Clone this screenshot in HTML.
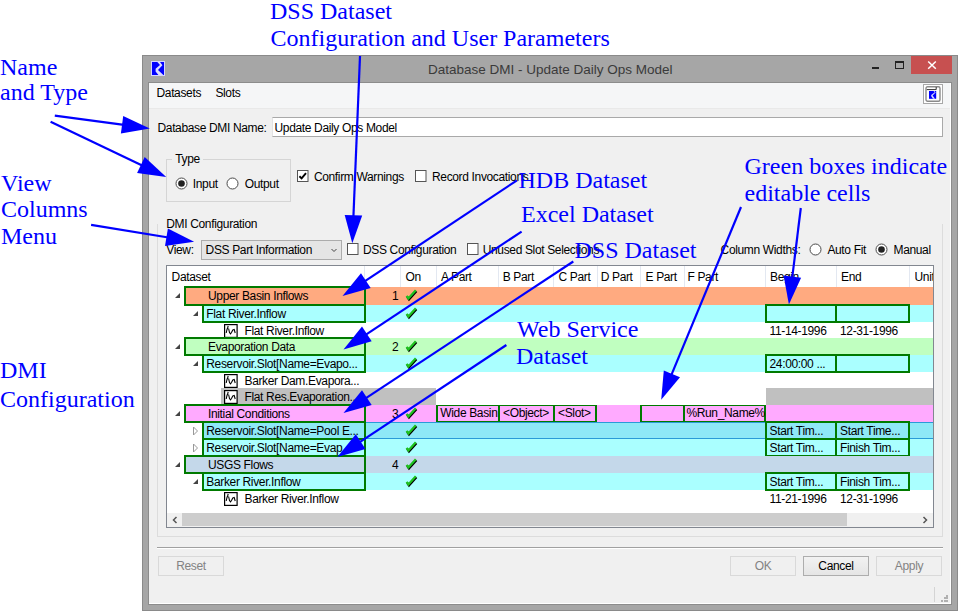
<!DOCTYPE html><html><head><meta charset="utf-8"><style>
html,body{margin:0;padding:0;background:#fff;width:963px;height:614px;overflow:hidden;position:relative}
.t{position:absolute;white-space:nowrap;font-family:"Liberation Sans",sans-serif;line-height:14px}
.s{position:absolute;white-space:nowrap;font-family:"Liberation Serif",serif;font-size:24px;line-height:28px;color:#0000ff}
.r{position:absolute;box-sizing:border-box}
svg{position:absolute;left:0;top:0}
</style></head><body>
<div class="r" style="left:142px;top:55px;width:816px;height:556px;background:#a6a6a6;border:1px solid #8a8a8a"></div>
<div class="r" style="left:148px;top:82px;width:804px;height:523px;background:#f0f0f0;border:1px solid #8c8c8c"></div>
<div class="r" style="left:149px;top:603px;width:802px;height:1px;background:#fff"></div>
<div class="r" style="left:950px;top:83px;width:1px;height:521px;background:#fff"></div>
<div class="r" style="left:149px;top:83px;width:801px;height:26px;background:#f5f6f7;border-bottom:1px solid #e9e9e9"></div>
<svg style="left:151px;top:61px" width="14" height="15" viewBox="0 0 14 15">
<rect x="0" y="0" width="14" height="15" fill="#d4d4ff"/>
<rect x="1" y="1" width="12" height="13" fill="#0000ff"/>
<polygon points="6.3,1 9,4 4.6,7.8 4.6,10.6 7.4,14 12.4,14 7,9 11.4,4.2 9,1" fill="#dcdcff"/>
</svg>
<div class="t" style="left:428.0px;top:62.72px;font-size:13.5px;letter-spacing:0px;color:#3a3a3a;">Database DMI - Update Daily Ops Model</div>
<div class="r" style="left:872px;top:66.5px;width:7px;height:2.5px;background:#222"></div>
<div class="r" style="left:895px;top:61px;width:9px;height:8px;border:1px solid #222;border-top:2px solid #222"></div>
<div class="r" style="left:911px;top:56px;width:41px;height:18px;background:#c75050"></div>
<svg style="left:926px;top:60px" width="12" height="10" viewBox="0 0 12 10">
<path d="M2.2 1.5 L9.8 8.8 M9.8 1.5 L2.2 8.8" stroke="#fff" stroke-width="1.5"/></svg>
<div class="t" style="left:156.5px;top:85.74px;font-size:12px;letter-spacing:-0.35px;color:#000;">Datasets</div>
<div class="t" style="left:215.4px;top:85.74px;font-size:12px;letter-spacing:-0.35px;color:#000;">Slots</div>
<div class="r" style="left:923px;top:84px;width:20px;height:20px;border:1px solid #a8a8a8;background:#fff"></div>
<svg style="left:925px;top:86px" width="16" height="16" viewBox="0 0 16 16">
<rect x="1" y="0.8" width="14" height="14.4" rx="1.5" fill="#fff" stroke="#8a8a8a" stroke-width="1.4"/>
<path d="M1.8 3.6 L11.2 3.6 L11.2 1" fill="none" stroke="#333" stroke-width="1"/>
<rect x="4" y="5" width="7.2" height="7.8" fill="#0000ff"/>
<polygon points="8.5,5 9.8,6.2 6.2,9 6.2,10.2 8,12.8 10,12.8 7.6,9.6 10.6,6.4 9.6,5" fill="#d8d8ff"/>
</svg>
<div class="t" style="left:157.5px;top:120.74px;font-size:12px;letter-spacing:-0.35px;color:#000;">Database DMI Name:</div>
<div class="r" style="left:272px;top:117px;width:671px;height:20px;background:#fff;border:1px solid #a9a9a9;border-left-color:#e3e3e3"></div>
<div class="t" style="left:274.5px;top:120.74px;font-size:12px;letter-spacing:-0.35px;color:#000;">Update Daily Ops Model</div>
<div class="r" style="left:166px;top:159px;width:125px;height:43px;border:1px solid #d5d5d5"></div>
<div class="r" style="left:172px;top:154px;width:31px;height:10px;background:#f0f0f0"></div>
<div class="t" style="left:175.3px;top:152.14px;font-size:12px;letter-spacing:-0.35px;color:#000;">Type</div>
<svg style="left:174.5px;top:176.8px" width="13" height="13" viewBox="0 0 13 13">
<circle cx="6.5" cy="6.5" r="5.5" fill="#fff" stroke="#4a4a4a" stroke-width="1"/><circle cx="6.5" cy="6.5" r="3.3" fill="#222"/></svg>
<div class="t" style="left:192.8px;top:176.84px;font-size:12px;letter-spacing:-0.35px;color:#000;">Input</div>
<svg style="left:226.3px;top:176.8px" width="13" height="13" viewBox="0 0 13 13">
<circle cx="6.5" cy="6.5" r="5.5" fill="#fff" stroke="#4a4a4a" stroke-width="1"/></svg>
<div class="t" style="left:244.7px;top:176.84px;font-size:12px;letter-spacing:-0.35px;color:#000;">Output</div>
<svg style="left:296.6px;top:169.8px" width="13" height="13" viewBox="0 0 13 13">
<rect x="0.5" y="0.5" width="10.5" height="11" fill="#fff" stroke="#555" stroke-width="1"/><path d="M2.4 6.3 L4.6 8.4 L9 3.2" fill="none" stroke="#000" stroke-width="1.9"/></svg>
<div class="t" style="left:313.9px;top:169.64px;font-size:12px;letter-spacing:-0.35px;color:#000;">Confirm Warnings</div>
<svg style="left:414.5px;top:169.8px" width="13" height="13" viewBox="0 0 13 13">
<rect x="0.5" y="0.5" width="10.5" height="11" fill="#fff" stroke="#555" stroke-width="1"/></svg>
<div class="t" style="left:432.0px;top:169.64px;font-size:12px;letter-spacing:-0.35px;color:#000;">Record Invocations</div>
<div class="r" style="left:157px;top:224px;width:786px;height:313px;border:1px solid #dcdcdc;border-top:none"></div>
<div class="t" style="left:166.3px;top:217.24px;font-size:12px;letter-spacing:-0.35px;color:#000;">DMI Configuration</div>
<div class="t" style="left:166.3px;top:242.84px;font-size:12px;letter-spacing:-0.35px;color:#000;">View:</div>
<div class="r" style="left:201px;top:240px;width:141px;height:20px;background:#e5e5e5;border:1px solid #acacac"></div>
<div class="t" style="left:205.6px;top:242.84px;font-size:12px;letter-spacing:-0.35px;color:#000;">DSS Part Information</div>
<svg style="left:330px;top:247px" width="8" height="7" viewBox="0 0 8 7"><path d="M1.5 2 L4 4.5 L6.5 2" stroke="#444" stroke-width="1" fill="none"/></svg>
<svg style="left:346.7px;top:243px" width="13" height="13" viewBox="0 0 13 13">
<rect x="0.5" y="0.5" width="10.5" height="11" fill="#fff" stroke="#555" stroke-width="1"/></svg>
<div class="t" style="left:363.0px;top:242.84px;font-size:12px;letter-spacing:-0.35px;color:#000;">DSS Configuration</div>
<svg style="left:466.5px;top:243px" width="13" height="13" viewBox="0 0 13 13">
<rect x="0.5" y="0.5" width="10.5" height="11" fill="#fff" stroke="#555" stroke-width="1"/></svg>
<div class="t" style="left:482.7px;top:242.84px;font-size:12px;letter-spacing:-0.35px;color:#000;">Unused Slot Selections</div>
<div class="t" style="left:720.6px;top:242.84px;font-size:12px;letter-spacing:-0.35px;color:#000;">Column Widths:</div>
<svg style="left:809.3px;top:242.5px" width="13" height="13" viewBox="0 0 13 13">
<circle cx="6.5" cy="6.5" r="5.5" fill="#fff" stroke="#4a4a4a" stroke-width="1"/></svg>
<div class="t" style="left:827.4px;top:242.84px;font-size:12px;letter-spacing:-0.35px;color:#000;">Auto Fit</div>
<svg style="left:875.4px;top:242.5px" width="13" height="13" viewBox="0 0 13 13">
<circle cx="6.5" cy="6.5" r="5.5" fill="#fff" stroke="#4a4a4a" stroke-width="1"/><circle cx="6.5" cy="6.5" r="3.3" fill="#222"/></svg>
<div class="t" style="left:893.5px;top:242.84px;font-size:12px;letter-spacing:-0.35px;color:#000;">Manual</div>
<div class="r" style="left:166px;top:265px;width:768px;height:263px;background:#fff;border:1px solid #828790"></div>
<div class="r" style="left:364px;top:266px;width:1px;height:21px;background:#e3e8f1"></div>
<div class="r" style="left:400px;top:266px;width:1px;height:21px;background:#e3e8f1"></div>
<div class="r" style="left:436px;top:266px;width:1px;height:21px;background:#e3e8f1"></div>
<div class="r" style="left:498px;top:266px;width:1px;height:21px;background:#e3e8f1"></div>
<div class="r" style="left:553px;top:266px;width:1px;height:21px;background:#e3e8f1"></div>
<div class="r" style="left:597px;top:266px;width:1px;height:21px;background:#e3e8f1"></div>
<div class="r" style="left:640px;top:266px;width:1px;height:21px;background:#e3e8f1"></div>
<div class="r" style="left:684px;top:266px;width:1px;height:21px;background:#e3e8f1"></div>
<div class="r" style="left:765px;top:266px;width:1px;height:21px;background:#e3e8f1"></div>
<div class="r" style="left:836px;top:266px;width:1px;height:21px;background:#e3e8f1"></div>
<div class="r" style="left:909px;top:266px;width:1px;height:21px;background:#e3e8f1"></div>
<div class="t" style="left:171.6px;top:270.14px;font-size:12px;letter-spacing:-0.35px;color:#000;">Dataset</div>
<div class="t" style="left:405.5px;top:270.14px;font-size:12px;letter-spacing:-0.35px;color:#000;">On</div>
<div class="t" style="left:441.0px;top:270.14px;font-size:12px;letter-spacing:-0.35px;color:#000;">A Part</div>
<div class="t" style="left:502.7px;top:270.14px;font-size:12px;letter-spacing:-0.35px;color:#000;">B Part</div>
<div class="t" style="left:558.5px;top:270.14px;font-size:12px;letter-spacing:-0.35px;color:#000;">C Part</div>
<div class="t" style="left:600.7px;top:270.14px;font-size:12px;letter-spacing:-0.35px;color:#000;">D Part</div>
<div class="t" style="left:645.5px;top:270.14px;font-size:12px;letter-spacing:-0.35px;color:#000;">E Part</div>
<div class="t" style="left:687.5px;top:270.14px;font-size:12px;letter-spacing:-0.35px;color:#000;">F Part</div>
<div class="t" style="left:770.0px;top:270.14px;font-size:12px;letter-spacing:-0.35px;color:#000;">Begin</div>
<div class="t" style="left:841.0px;top:270.14px;font-size:12px;letter-spacing:-0.35px;color:#000;">End</div>
<div class="t" style="left:914.5px;top:270.14px;font-size:12px;letter-spacing:-0.35px;color:#000;width:18.5px;overflow:hidden">Unit</div>
<div class="r" style="left:184px;top:287px;width:749px;height:18px;background:#ffaa80"></div>
<svg style="left:173.5px;top:292px" width="7" height="7" viewBox="0 0 7 7"><path d="M6 1 L6 6 L1 6 Z" fill="#444"/></svg>
<div class="r" style="left:184px;top:286px;width:182px;height:20px;border:2px solid #007a00"></div>
<div class="t" style="left:208.0px;top:289.34px;font-size:12px;letter-spacing:-0.35px;color:#000;">Upper Basin Inflows</div>
<div class="t" style="left:392.0px;top:289.34px;font-size:12px;letter-spacing:-0.35px;color:#000;">1</div>
<svg style="left:405px;top:289px" width="13" height="13" viewBox="0 0 13 13">
<path d="M1.6 6.8 L3.4 9.4 L10.8 1.2" fill="none" stroke="#000" stroke-width="2.3" transform="translate(0.6,1.1)"/>
<path d="M1.6 6.8 L3.4 9.4 L10.8 1.2" fill="none" stroke="#1ec21e" stroke-width="2.3"/></svg>
<div class="r" style="left:202px;top:305px;width:731px;height:17px;background:#aaffff"></div>
<svg style="left:192px;top:310px" width="7" height="7" viewBox="0 0 7 7"><path d="M6 1 L6 6 L1 6 Z" fill="#444"/></svg>
<div class="r" style="left:202px;top:304px;width:164px;height:19px;border:2px solid #007a00"></div>
<div class="t" style="left:206.3px;top:307.34px;font-size:12px;letter-spacing:-0.35px;color:#000;">Flat River.Inflow</div>
<svg style="left:405px;top:307px" width="13" height="13" viewBox="0 0 13 13">
<path d="M1.6 6.8 L3.4 9.4 L10.8 1.2" fill="none" stroke="#000" stroke-width="2.3" transform="translate(0.6,1.1)"/>
<path d="M1.6 6.8 L3.4 9.4 L10.8 1.2" fill="none" stroke="#1ec21e" stroke-width="2.3"/></svg>
<div class="r" style="left:765px;top:304px;width:72px;height:19px;border:2px solid #007a00"></div>
<div class="r" style="left:835px;top:304px;width:75px;height:19px;border:2px solid #007a00"></div>
<div class="t" style="left:769.5px;top:307.34px;font-size:12px;letter-spacing:-0.35px;color:#000;"></div>
<div class="t" style="left:840.0px;top:307.34px;font-size:12px;letter-spacing:-0.35px;color:#000;"></div>
<svg style="left:224px;top:323.5px" width="15" height="15" viewBox="0 0 15 15">
<rect x="0.6" y="0.6" width="12.5" height="12.8" fill="#fff" stroke="#000" stroke-width="1.2"/>
<path d="M2.2 9 L3 5.5 L3.6 4 L4.2 2 M4.6 4.5 L5.5 8.5 L6.5 9.8 L7.5 8.5 L8.8 6 L10.2 5.5 L11.2 9" fill="none" stroke="#000" stroke-width="1.1"/></svg>
<div class="t" style="left:244.5px;top:324.34px;font-size:12px;letter-spacing:-0.35px;color:#000;">Flat River.Inflow</div>
<div class="t" style="left:769.5px;top:324.34px;font-size:12px;letter-spacing:-0.35px;color:#000;">11-14-1996</div>
<div class="t" style="left:840.0px;top:324.34px;font-size:12px;letter-spacing:-0.35px;color:#000;">12-31-1996</div>
<div class="r" style="left:184px;top:338px;width:749px;height:17px;background:#c0ffc0"></div>
<svg style="left:173.5px;top:343px" width="7" height="7" viewBox="0 0 7 7"><path d="M6 1 L6 6 L1 6 Z" fill="#444"/></svg>
<div class="r" style="left:184px;top:337px;width:182px;height:19px;border:2px solid #007a00"></div>
<div class="t" style="left:208.0px;top:340.34px;font-size:12px;letter-spacing:-0.35px;color:#000;">Evaporation Data</div>
<div class="t" style="left:392.0px;top:340.34px;font-size:12px;letter-spacing:-0.35px;color:#000;">2</div>
<svg style="left:405px;top:340px" width="13" height="13" viewBox="0 0 13 13">
<path d="M1.6 6.8 L3.4 9.4 L10.8 1.2" fill="none" stroke="#000" stroke-width="2.3" transform="translate(0.6,1.1)"/>
<path d="M1.6 6.8 L3.4 9.4 L10.8 1.2" fill="none" stroke="#1ec21e" stroke-width="2.3"/></svg>
<div class="r" style="left:202px;top:355px;width:731px;height:17px;background:#aaffff"></div>
<svg style="left:192px;top:360px" width="7" height="7" viewBox="0 0 7 7"><path d="M6 1 L6 6 L1 6 Z" fill="#444"/></svg>
<div class="r" style="left:202px;top:354px;width:164px;height:19px;border:2px solid #007a00"></div>
<div class="t" style="left:206.3px;top:357.34px;font-size:12px;letter-spacing:-0.35px;color:#000;">Reservoir.Slot[Name=Evapo...</div>
<svg style="left:405px;top:357px" width="13" height="13" viewBox="0 0 13 13">
<path d="M1.6 6.8 L3.4 9.4 L10.8 1.2" fill="none" stroke="#000" stroke-width="2.3" transform="translate(0.6,1.1)"/>
<path d="M1.6 6.8 L3.4 9.4 L10.8 1.2" fill="none" stroke="#1ec21e" stroke-width="2.3"/></svg>
<div class="r" style="left:765px;top:354px;width:72px;height:19px;border:2px solid #007a00"></div>
<div class="r" style="left:835px;top:354px;width:75px;height:19px;border:2px solid #007a00"></div>
<div class="t" style="left:769.5px;top:357.34px;font-size:12px;letter-spacing:-0.35px;color:#000;">24:00:00 ...</div>
<div class="t" style="left:840.0px;top:357.34px;font-size:12px;letter-spacing:-0.35px;color:#000;"></div>
<svg style="left:224px;top:373.5px" width="15" height="15" viewBox="0 0 15 15">
<rect x="0.6" y="0.6" width="12.5" height="12.8" fill="#fff" stroke="#000" stroke-width="1.2"/>
<path d="M2.2 9 L3 5.5 L3.6 4 L4.2 2 M4.6 4.5 L5.5 8.5 L6.5 9.8 L7.5 8.5 L8.8 6 L10.2 5.5 L11.2 9" fill="none" stroke="#000" stroke-width="1.1"/></svg>
<div class="t" style="left:244.5px;top:374.34px;font-size:12px;letter-spacing:-0.35px;color:#000;">Barker Dam.Evapora...</div>
<div class="r" style="left:221px;top:388px;width:215px;height:17px;background:#c0c0c0"></div>
<div class="r" style="left:766px;top:388px;width:167px;height:17px;background:#c0c0c0"></div>
<svg style="left:224px;top:389.5px" width="15" height="15" viewBox="0 0 15 15">
<rect x="0.6" y="0.6" width="12.5" height="12.8" fill="#fff" stroke="#000" stroke-width="1.2"/>
<path d="M2.2 9 L3 5.5 L3.6 4 L4.2 2 M4.6 4.5 L5.5 8.5 L6.5 9.8 L7.5 8.5 L8.8 6 L10.2 5.5 L11.2 9" fill="none" stroke="#000" stroke-width="1.1"/></svg>
<div class="t" style="left:244.5px;top:390.34px;font-size:12px;letter-spacing:-0.35px;color:#000;">Flat Res.Evaporation...</div>
<div class="r" style="left:184px;top:405px;width:749px;height:17px;background:#ffaaff"></div>
<svg style="left:173.5px;top:410px" width="7" height="7" viewBox="0 0 7 7"><path d="M6 1 L6 6 L1 6 Z" fill="#444"/></svg>
<div class="r" style="left:184px;top:404px;width:182px;height:19px;border:2px solid #007a00"></div>
<div class="t" style="left:208.0px;top:407.34px;font-size:12px;letter-spacing:-0.35px;color:#000;">Initial Conditions</div>
<div class="t" style="left:392.0px;top:407.34px;font-size:12px;letter-spacing:-0.35px;color:#000;">3</div>
<svg style="left:405px;top:407px" width="13" height="13" viewBox="0 0 13 13">
<path d="M1.6 6.8 L3.4 9.4 L10.8 1.2" fill="none" stroke="#000" stroke-width="2.3" transform="translate(0.6,1.1)"/>
<path d="M1.6 6.8 L3.4 9.4 L10.8 1.2" fill="none" stroke="#1ec21e" stroke-width="2.3"/></svg>
<div class="r" style="left:436px;top:405px;width:64px;height:17px;border:1px solid #007a00;border-left-width:2px;border-right-width:2px"></div>
<div class="t" style="left:440.3px;top:406.34px;font-size:12px;letter-spacing:-0.35px;color:#000;">Wide Basin</div>
<div class="r" style="left:498px;top:405px;width:57px;height:17px;border:1px solid #007a00;border-left-width:2px;border-right-width:2px"></div>
<div class="t" style="left:503.0px;top:406.34px;font-size:12px;letter-spacing:-0.35px;color:#000;">&lt;Object&gt;</div>
<div class="r" style="left:553px;top:405px;width:44px;height:17px;border:1px solid #007a00;border-left-width:2px;border-right-width:2px"></div>
<div class="t" style="left:558.0px;top:406.34px;font-size:12px;letter-spacing:-0.35px;color:#000;">&lt;Slot&gt;</div>
<div class="r" style="left:640px;top:405px;width:45px;height:17px;border:1px solid #007a00;border-left-width:2px;border-right-width:2px"></div>
<div class="r" style="left:683px;top:405px;width:83px;height:17px;border:1px solid #007a00;border-left-width:2px;border-right-width:2px"></div>
<div class="t" style="left:686.4px;top:406.34px;font-size:12px;letter-spacing:-0.35px;color:#000;">%Run_Name%</div>
<div class="r" style="left:202px;top:422px;width:731px;height:17px;background:#8ee8f7"></div>
<div class="r" style="left:202px;top:422px;width:731px;height:1px;background:#2a9ad8"></div>
<div class="r" style="left:202px;top:438px;width:731px;height:1px;background:#2a9ad8"></div>
<svg style="left:192px;top:426px" width="7" height="10" viewBox="0 0 7 10"><path d="M1.5 1 L5.5 5 L1.5 9 Z" fill="#fff" stroke="#999" stroke-width="1"/></svg>
<div class="r" style="left:202px;top:421px;width:164px;height:19px;border:2px solid #007a00"></div>
<div class="t" style="left:206.3px;top:424.34px;font-size:12px;letter-spacing:-0.35px;color:#000;">Reservoir.Slot[Name=Pool E...</div>
<svg style="left:405px;top:424px" width="13" height="13" viewBox="0 0 13 13">
<path d="M1.6 6.8 L3.4 9.4 L10.8 1.2" fill="none" stroke="#000" stroke-width="2.3" transform="translate(0.6,1.1)"/>
<path d="M1.6 6.8 L3.4 9.4 L10.8 1.2" fill="none" stroke="#1ec21e" stroke-width="2.3"/></svg>
<div class="r" style="left:765px;top:421px;width:72px;height:19px;border:2px solid #007a00"></div>
<div class="r" style="left:835px;top:421px;width:75px;height:19px;border:2px solid #007a00"></div>
<div class="t" style="left:769.5px;top:424.34px;font-size:12px;letter-spacing:-0.35px;color:#000;">Start Tim...</div>
<div class="t" style="left:840.0px;top:424.34px;font-size:12px;letter-spacing:-0.35px;color:#000;">Start Time...</div>
<div class="r" style="left:202px;top:439px;width:731px;height:17px;background:#aaffff"></div>
<svg style="left:192px;top:443px" width="7" height="10" viewBox="0 0 7 10"><path d="M1.5 1 L5.5 5 L1.5 9 Z" fill="#fff" stroke="#999" stroke-width="1"/></svg>
<div class="r" style="left:202px;top:438px;width:164px;height:19px;border:2px solid #007a00"></div>
<div class="t" style="left:206.3px;top:441.34px;font-size:12px;letter-spacing:-0.35px;color:#000;">Reservoir.Slot[Name=Evap...</div>
<svg style="left:405px;top:441px" width="13" height="13" viewBox="0 0 13 13">
<path d="M1.6 6.8 L3.4 9.4 L10.8 1.2" fill="none" stroke="#000" stroke-width="2.3" transform="translate(0.6,1.1)"/>
<path d="M1.6 6.8 L3.4 9.4 L10.8 1.2" fill="none" stroke="#1ec21e" stroke-width="2.3"/></svg>
<div class="r" style="left:765px;top:438px;width:72px;height:19px;border:2px solid #007a00"></div>
<div class="r" style="left:835px;top:438px;width:75px;height:19px;border:2px solid #007a00"></div>
<div class="t" style="left:769.5px;top:441.34px;font-size:12px;letter-spacing:-0.35px;color:#000;">Start Tim...</div>
<div class="t" style="left:840.0px;top:441.34px;font-size:12px;letter-spacing:-0.35px;color:#000;">Finish Tim...</div>
<div class="r" style="left:184px;top:456px;width:749px;height:17px;background:#c4d8ea"></div>
<svg style="left:173.5px;top:461px" width="7" height="7" viewBox="0 0 7 7"><path d="M6 1 L6 6 L1 6 Z" fill="#444"/></svg>
<div class="r" style="left:184px;top:455px;width:182px;height:19px;border:2px solid #007a00"></div>
<div class="t" style="left:208.0px;top:458.34px;font-size:12px;letter-spacing:-0.35px;color:#000;">USGS Flows</div>
<div class="t" style="left:392.0px;top:458.34px;font-size:12px;letter-spacing:-0.35px;color:#000;">4</div>
<svg style="left:405px;top:458px" width="13" height="13" viewBox="0 0 13 13">
<path d="M1.6 6.8 L3.4 9.4 L10.8 1.2" fill="none" stroke="#000" stroke-width="2.3" transform="translate(0.6,1.1)"/>
<path d="M1.6 6.8 L3.4 9.4 L10.8 1.2" fill="none" stroke="#1ec21e" stroke-width="2.3"/></svg>
<div class="r" style="left:202px;top:473px;width:731px;height:17px;background:#aaffff"></div>
<svg style="left:192px;top:478px" width="7" height="7" viewBox="0 0 7 7"><path d="M6 1 L6 6 L1 6 Z" fill="#444"/></svg>
<div class="r" style="left:202px;top:472px;width:164px;height:19px;border:2px solid #007a00"></div>
<div class="t" style="left:206.3px;top:475.34px;font-size:12px;letter-spacing:-0.35px;color:#000;">Barker River.Inflow</div>
<svg style="left:405px;top:475px" width="13" height="13" viewBox="0 0 13 13">
<path d="M1.6 6.8 L3.4 9.4 L10.8 1.2" fill="none" stroke="#000" stroke-width="2.3" transform="translate(0.6,1.1)"/>
<path d="M1.6 6.8 L3.4 9.4 L10.8 1.2" fill="none" stroke="#1ec21e" stroke-width="2.3"/></svg>
<div class="r" style="left:765px;top:472px;width:72px;height:19px;border:2px solid #007a00"></div>
<div class="r" style="left:835px;top:472px;width:75px;height:19px;border:2px solid #007a00"></div>
<div class="t" style="left:769.5px;top:475.34px;font-size:12px;letter-spacing:-0.35px;color:#000;">Start Tim...</div>
<div class="t" style="left:840.0px;top:475.34px;font-size:12px;letter-spacing:-0.35px;color:#000;">Finish Tim...</div>
<svg style="left:224px;top:491.5px" width="15" height="15" viewBox="0 0 15 15">
<rect x="0.6" y="0.6" width="12.5" height="12.8" fill="#fff" stroke="#000" stroke-width="1.2"/>
<path d="M2.2 9 L3 5.5 L3.6 4 L4.2 2 M4.6 4.5 L5.5 8.5 L6.5 9.8 L7.5 8.5 L8.8 6 L10.2 5.5 L11.2 9" fill="none" stroke="#000" stroke-width="1.1"/></svg>
<div class="t" style="left:244.5px;top:492.34px;font-size:12px;letter-spacing:-0.35px;color:#000;">Barker River.Inflow</div>
<div class="t" style="left:769.5px;top:492.34px;font-size:12px;letter-spacing:-0.35px;color:#000;">11-21-1996</div>
<div class="t" style="left:840.0px;top:492.34px;font-size:12px;letter-spacing:-0.35px;color:#000;">12-31-1996</div>
<div class="r" style="left:167px;top:513px;width:766px;height:14px;background:#f0f0f0"></div>
<div class="r" style="left:182px;top:513px;width:665px;height:13px;background:#cdcdcd"></div>
<svg style="left:170.5px;top:516px" width="8" height="8" viewBox="0 0 8 8"><path d="M5.5 1 L2.5 4 L5.5 7" stroke="#555" stroke-width="1.5" fill="none"/></svg>
<svg style="left:921px;top:516px" width="8" height="8" viewBox="0 0 8 8"><path d="M2.5 1 L5.5 4 L2.5 7" stroke="#555" stroke-width="1.5" fill="none"/></svg>
<div class="r" style="left:157px;top:547px;width:786px;height:2px;border-top:1px solid #a0a0a0;border-bottom:1px solid #fff"></div>
<div class="r" style="left:158px;top:556px;width:66px;height:20px;border:1px solid #d9d9d9;background:#f0f0f0"></div>
<div class="t" style="left:158px;top:559px;width:66px;text-align:center;font-size:12px;letter-spacing:-0.35px;color:#838383">Reset</div>
<div class="r" style="left:730px;top:556px;width:66px;height:20px;border:1px solid #d9d9d9;background:#f0f0f0"></div>
<div class="t" style="left:730px;top:559px;width:66px;text-align:center;font-size:12px;letter-spacing:-0.35px;color:#838383">OK</div>
<div class="r" style="left:803px;top:556px;width:66px;height:20px;border:1px solid #adadad;background:linear-gradient(#f2f2f2,#e5e5e5)"></div>
<div class="t" style="left:803px;top:559px;width:66px;text-align:center;font-size:12px;letter-spacing:-0.35px;color:#000">Cancel</div>
<div class="r" style="left:876px;top:556px;width:66px;height:20px;border:1px solid #d9d9d9;background:#f0f0f0"></div>
<div class="t" style="left:876px;top:559px;width:66px;text-align:center;font-size:12px;letter-spacing:-0.35px;color:#838383">Apply</div>
<div class="r" style="left:934px;top:587px;width:1px;height:15px;background:#d4d4d4"></div>
<div class="r" style="left:946px;top:595px;width:2px;height:2px;background:#b0b0b0"></div>
<div class="r" style="left:944px;top:597px;width:2px;height:2px;background:#b0b0b0"></div>
<div class="r" style="left:946px;top:597px;width:2px;height:2px;background:#b0b0b0"></div>
<div class="r" style="left:941px;top:600px;width:2px;height:2px;background:#b0b0b0"></div>
<div class="r" style="left:944px;top:600px;width:2px;height:2px;background:#b0b0b0"></div>
<div class="r" style="left:946px;top:600px;width:2px;height:2px;background:#b0b0b0"></div>
<div class="s" style="left:270.0px;top:-3.30px">DSS Dataset</div>
<div class="s" style="left:270.5px;top:24.40px">Configuration and User Parameters</div>
<div class="s" style="left:0.0px;top:52.90px">Name</div>
<div class="s" style="left:0.0px;top:78.40px">and Type</div>
<div class="s" style="left:1.0px;top:168.60px">View</div>
<div class="s" style="left:1.0px;top:195.40px">Columns</div>
<div class="s" style="left:1.0px;top:221.80px">Menu</div>
<div class="s" style="left:0.0px;top:356.40px">DMI</div>
<div class="s" style="left:0.0px;top:384.50px">Configuration</div>
<div class="s" style="left:518.5px;top:165.50px">HDB Dataset</div>
<div class="s" style="left:521.0px;top:199.60px">Excel Dataset</div>
<div class="s" style="left:574.5px;top:235.50px">DSS Dataset</div>
<div class="s" style="left:517.0px;top:314.80px">Web Service</div>
<div class="s" style="left:516.0px;top:342.40px">Dataset</div>
<div class="s" style="left:744.5px;top:152.40px">Green boxes indicate</div>
<div class="s" style="left:744.5px;top:178.50px">editable cells</div>
<svg width="963" height="614" viewBox="0 0 963 614" style="left:0;top:0">
<line x1="360" y1="56" x2="353.4" y2="217.2" stroke="#0000ff" stroke-width="2.2"/>
<polygon points="352.3,243.2 344.7,214.9 362.2,215.6" fill="#0000ff"/>
<line x1="54.8" y1="115.6" x2="124.0" y2="124.9" stroke="#0000ff" stroke-width="2.2"/>
<polygon points="149.8,128.4 120.9,133.4 123.2,115.9" fill="#0000ff"/>
<line x1="50.6" y1="121.8" x2="142.7" y2="165.8" stroke="#0000ff" stroke-width="2.2"/>
<polygon points="166.2,177 137.1,172.9 144.7,157.0" fill="#0000ff"/>
<line x1="91.1" y1="224.8" x2="168.4" y2="237.5" stroke="#0000ff" stroke-width="2.2"/>
<polygon points="194.1,241.7 165.0,245.9 167.9,228.5" fill="#0000ff"/>
<line x1="517" y1="180.3" x2="364.2" y2="281.7" stroke="#0000ff" stroke-width="2.2"/>
<polygon points="342.5,296.1 361.0,273.3 370.7,288.0" fill="#0000ff"/>
<line x1="521.6" y1="231.6" x2="365.2" y2="335.1" stroke="#0000ff" stroke-width="2.2"/>
<polygon points="343.5,349.4 362.0,326.6 371.7,341.3" fill="#0000ff"/>
<line x1="573.3" y1="261.5" x2="365.2" y2="398.7" stroke="#0000ff" stroke-width="2.2"/>
<polygon points="343.5,413 362.0,390.2 371.7,404.9" fill="#0000ff"/>
<line x1="506.4" y1="345" x2="359.0" y2="442.6" stroke="#0000ff" stroke-width="2.2"/>
<polygon points="337.3,457 355.8,434.2 365.5,448.9" fill="#0000ff"/>
<line x1="741" y1="207" x2="671.1" y2="375.7" stroke="#0000ff" stroke-width="2.2"/>
<polygon points="661.2,399.7 663.8,370.5 680.0,377.2" fill="#0000ff"/>
<line x1="800.8" y1="208" x2="792.1" y2="278.7" stroke="#0000ff" stroke-width="2.2"/>
<polygon points="788.9,304.5 783.6,275.6 801.1,277.8" fill="#0000ff"/>
</svg>
</body></html>
